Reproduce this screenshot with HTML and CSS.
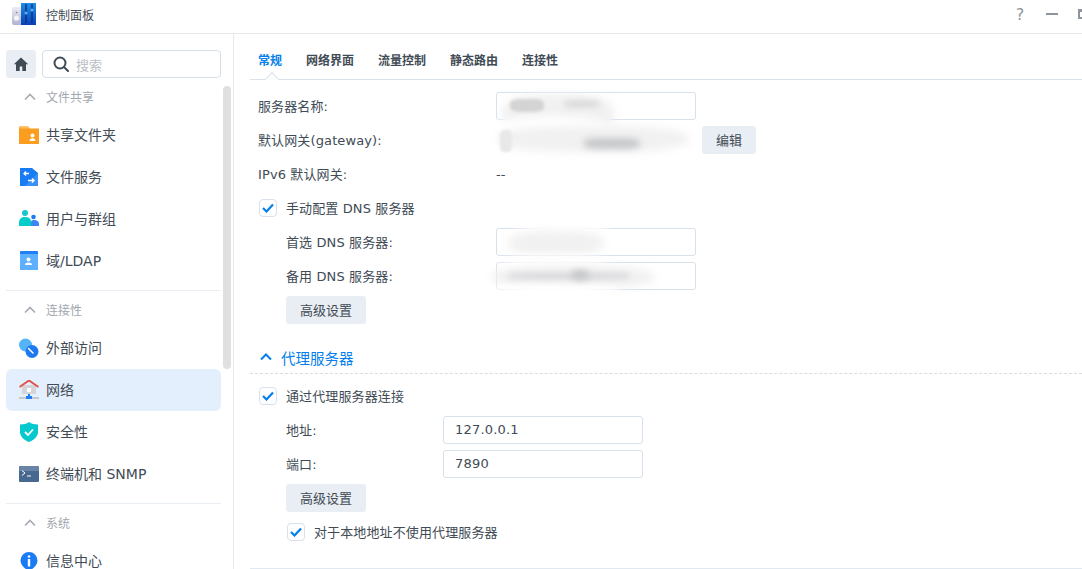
FILE: index.html
```html
<!DOCTYPE html>
<html lang="zh-CN">
<head>
<meta charset="utf-8">
<title>控制面板</title>
<link rel="stylesheet" href="styles.css">
</head>
<body>
<div class="window">
  <header class="titlebar">
    <svg class="app-icon" width="24" height="22" viewBox="0 0 24 22">
      <defs>
        <linearGradient id="appL" x1="0" y1="0" x2="0" y2="1"><stop offset="0" stop-color="#eceDF5"/><stop offset="1" stop-color="#b0b2d0"/></linearGradient>
        <linearGradient id="appR" x1="0" y1="0" x2="0" y2="1"><stop offset="0" stop-color="#1c8fe8"/><stop offset="1" stop-color="#0b3fb8"/></linearGradient>
      </defs>
      <path d="M0 6a2 2 0 0 1 2-2h7v18H2a2 2 0 0 1-2-2z" fill="url(#appL)"/>
      <rect x="9" y="0" width="15" height="22" fill="url(#appR)"/>
      <circle cx="4.500" cy="15" r="2.600" fill="#f4f4f8"/>
      <circle cx="4.500" cy="9.500" r=".8" fill="#777"/>
      <path d="M14 1v19M20 1v19" stroke="#0a2a70" stroke-width="1.200"/>
      <circle cx="14" cy="10" r="1.500" fill="#5ab0f5"/>
      <circle cx="20" cy="7" r="1.500" fill="#5ab0f5"/>
    </svg>
    <span class="app-title">控制面板</span>
    <div class="win-controls">
      <span class="win-help">?</span>
      <span class="win-min"></span>
      <span class="win-max"></span>
    </div>
  </header>
  <div class="body">
    <aside class="sidebar">
      <div class="search-row">
        <button class="home-btn" aria-label="主页">
          <svg width="16" height="16" viewBox="0 0 16 16"><path d="M8 1.500 .8 8.200h2.200V15h3.700v-4.500h2.600V15H13V8.200h2.200z" fill="#414b55"/></svg>
        </button>
        <div class="search">
          <svg width="16" height="16" viewBox="0 0 16 16" fill="none" stroke="#414b55" stroke-width="2"><circle cx="7" cy="7" r="5.500"/><path d="m11 11 4 4" stroke-linecap="round"/></svg>
          <span class="search-ph">搜索</span>
        </div>
      </div>
      <div class="group">
        <div class="group-head"><svg class="chev" width="12" height="8" viewBox="0 0 12 8" fill="none"><path d="m1 6.500 5-5 5 5" stroke="#a6abb2" stroke-width="1.600"/></svg><span>文件共享</span></div>
        <div class="nav-item">
          <svg width="20" height="20" viewBox="0 0 20 20"><path d="M0 1.500h9l2 2h9V19H0z" fill="#fb9d1e"/><path d="M0 1.500h9l2 2H0z" fill="#fdbb5c"/><circle cx="13.500" cy="10.500" r="2" fill="#fff"/><path d="M10.500 16c0-2 1.300-2.800 3-2.800s3 .8 3 2.800z" fill="#fff"/></svg>
          <span>共享文件夹</span>
        </div>
        <div class="nav-item">
          <svg width="20" height="20" viewBox="0 0 20 20"><path d="M1 1h12l6 5v13H1z" fill="#1a7cf5"/><path d="M19 6v13H6l13-13z" fill="#57a5fb" opacity=".5"/><path d="M10 6.500H5m2-2-2 2 2 2M9 13.500h6m-2-2 2 2-2 2" fill="none" stroke="#fff" stroke-width="1.300"/></svg>
          <span>文件服务</span>
        </div>
        <div class="nav-item">
          <svg width="20" height="20" viewBox="0 0 20 20"><circle cx="6" cy="4" r="3" fill="#14c7cf"/><path d="M0 17v-3.500C0 10 2.500 8 6 8s5.500 1.500 6 4v5z" fill="#05cdc9"/><circle cx="14.500" cy="8" r="2.300" fill="#1a7cf5"/><path d="M12 17v-4c.3-1.500 1.300-2 3-2 3 0 5 1.500 5 4v2z" fill="#3a86f3"/></svg>
          <span>用户与群组</span>
        </div>
        <div class="nav-item">
          <svg width="20" height="20" viewBox="0 0 20 20"><rect x="1" y="0" width="18" height="19" rx="1" fill="#1f80f6"/><path d="M1 3h18v16H2a1 1 0 0 1-1-1z" fill="#5cb0fd"/><circle cx="9.500" cy="8.500" r="2" fill="#fff"/><path d="M6 14c0-1.800 1.500-2.500 3.500-2.500S13 12.200 13 14z" fill="#fff"/></svg>
          <span>域/LDAP</span>
        </div>
      </div>
      <div class="group">
        <div class="group-head"><svg class="chev" width="12" height="8" viewBox="0 0 12 8" fill="none"><path d="m1 6.500 5-5 5 5" stroke="#a6abb2" stroke-width="1.600"/></svg><span>连接性</span></div>
        <div class="nav-item">
          <svg width="20" height="20" viewBox="0 0 20 20"><circle cx="6.500" cy="7" r="6.500" fill="#55b4f8"/><circle cx="13" cy="13.500" r="6.500" fill="#1f78ee"/><path d="M9.500 10.500 14 15" stroke="#fff" stroke-width="1.500" stroke-linecap="round"/></svg>
          <span>外部访问</span>
        </div>
        <div class="nav-item active">
          <svg width="20" height="20" viewBox="0 0 20 20"><rect x="3" y="5" width="14" height="9" fill="#d3d5d8"/><rect x="8" y="8" width="4" height="4" fill="#fff"/><path d="M.5 7 10 .5 19.500 7" fill="none" stroke="#e2524e" stroke-width="2"/><rect x="0" y="17" width="20" height="2" fill="#c4c8cc"/><rect x="7" y="16" width="6" height="3" fill="#1f7ff2"/><rect x="9" y="14" width="2" height="3" fill="#1f7ff2"/></svg>
          <span>网络</span>
        </div>
        <div class="nav-item">
          <svg width="20" height="20" viewBox="0 0 20 20"><path d="M10 0c2.500 1.800 5.500 2.500 9 2.500V10c0 4.500-4 8-9 10-5-2-9-5.500-9-10V2.500C4.500 2.500 7.500 1.800 10 0z" fill="#07c9cd"/><path d="m6 10 3 3 5-5.500" fill="none" stroke="#fff" stroke-width="1.800"/></svg>
          <span>安全性</span>
        </div>
        <div class="nav-item">
          <svg width="20" height="16" viewBox="0 0 20 16"><rect width="20" height="16" rx="1" fill="#47688f"/><rect width="20" height="5" fill="#7e9ab8" opacity=".6"/><path d="m3 4.500 3 2.500-3 2.500" fill="none" stroke="#fff" stroke-width="1"/><path d="M8 10h4" stroke="#fff" stroke-width="1"/></svg>
          <span>终端机和 SNMP</span>
        </div>
      </div>
      <div class="group last">
        <div class="group-head"><svg class="chev" width="12" height="8" viewBox="0 0 12 8" fill="none"><path d="m1 6.500 5-5 5 5" stroke="#a6abb2" stroke-width="1.600"/></svg><span>系统</span></div>
        <div class="nav-item">
          <svg width="20" height="20" viewBox="0 0 20 20"><path d="M10 1a8.500 8.500 0 0 1 8.500 8.500C18.500 14 14 18 10 20 6 18 1.500 14 1.500 9.500A8.500 8.500 0 0 1 10 1z" fill="#1a7cf5"/><circle cx="10" cy="5.500" r="1.300" fill="#fff"/><rect x="8.800" y="8" width="2.400" height="7.500" fill="#fff"/></svg>
          <span>信息中心</span>
        </div>
      </div>
      <div class="scrollbar"></div>
    </aside>
    <main class="main">
      <nav class="tabs">
        <span class="tab active">常规</span>
        <span class="tab">网络界面</span>
        <span class="tab">流量控制</span>
        <span class="tab">静态路由</span>
        <span class="tab">连接性</span>
      </nav>
      <div class="form">
        <div class="row"><label class="lbl w238">服务器名称:</label><div class="input"></div></div>
        <div class="row"><label class="lbl w238">默认网关(gateway):</label><div class="value w206"></div><button class="btn btn-edit">编辑</button></div>
        <div class="row"><label class="lbl w238">IPv6 默认网关:</label><div class="value">--</div></div>
        <div class="row"><span class="check"><svg width="12" height="10" viewBox="0 0 12 10"><path d="m1 5 3.500 3.500L11 1.500" fill="none" stroke="#057feb" stroke-width="2.200"/></svg></span><span class="lbl">手动配置 DNS 服务器</span></div>
        <div class="row in1"><label class="lbl w210">首选 DNS 服务器:</label><div class="input"></div></div>
        <div class="row in1"><label class="lbl w210">备用 DNS 服务器:</label><div class="input"></div></div>
        <div class="row in1"><button class="btn">高级设置</button></div>
      </div>
      <div class="section-head">
        <svg width="12" height="8" viewBox="0 0 12 8" fill="none"><path d="m1 6.500 5-5 5 5" stroke="#057feb" stroke-width="2"/></svg>
        <span>代理服务器</span>
      </div>
      <div class="form proxy">
        <div class="row"><span class="check"><svg width="12" height="10" viewBox="0 0 12 10"><path d="m1 5 3.500 3.500L11 1.500" fill="none" stroke="#057feb" stroke-width="2.200"/></svg></span><span class="lbl">通过代理服务器连接</span></div>
        <div class="row in1"><label class="lbl w157">地址:</label><div class="input">127.0.0.1</div></div>
        <div class="row in1"><label class="lbl w157">端口:</label><div class="input">7890</div></div>
        <div class="row in1"><button class="btn">高级设置</button></div>
        <div class="row in1"><span class="check"><svg width="12" height="10" viewBox="0 0 12 10"><path d="m1 5 3.500 3.500L11 1.500" fill="none" stroke="#057feb" stroke-width="2.200"/></svg></span><span class="lbl">对于本地地址不使用代理服务器</span></div>
      </div>
      <div class="foot-line"></div>
      <div class="redactions">
        <i class="wash a1"></i><i class="white b1"></i><i class="smudge c1"></i><i class="smudge c2"></i>
        <i class="wash a2"></i><i class="smudge c3"></i><i class="smudge c4"></i>
        <i class="white b3"></i><i class="wash a3"></i>
        <i class="white b4"></i><i class="wash a4"></i><i class="white b5"></i><i class="smudge c5"></i><i class="smudge c6"></i>
      </div>
    </main>
  </div>
</div>
</body>
</html>
```

FILE: styles.css
```css
* { box-sizing: border-box; }
html, body { margin: 0; height: 100%; overflow: hidden; background: #fff; }
body {
  font-family: "DejaVu Sans", "Noto Sans CJK SC", sans-serif;
  font-size: 13px;
  color: #414b55;
}
.window { display: flex; flex-direction: column; height: 569px; }

.titlebar {
  flex: none;
  height: 34px;
  display: flex;
  align-items: center;
  padding: 0 0 5px 12px;
  border-bottom: 1px solid #e6e8ea;
}
.app-icon { display: block; }
.app-title { margin-left: 10px; font-size: 12px; }
.win-controls { margin-left: auto; display: flex; align-items: center; }
.win-help { width: 16px; text-align: center; font-size: 16px; color: #8d949c; }
.win-min { width: 12px; height: 2px; margin-left: 18px; background: #8d949c; }
.win-max { width: 12px; height: 10px; margin-left: 20px; margin-right: -8px; border: 2px solid #8d949c; border-top-width: 3px; }

.body { flex: 1; display: flex; min-height: 0; }

.sidebar {
  flex: none;
  width: 234px;
  position: relative;
  overflow: hidden;
  border-right: 1px solid #e6e8ea;
  padding: 16px 12px 0 6px;
}
.search-row { display: flex; gap: 6px; height: 28px; }
.home-btn {
  width: 30px; height: 28px; padding: 0; border: 0; border-radius: 3px;
  background: #e9edf4;
  display: flex; align-items: center; justify-content: center;
}
.search {
  flex: 1;
  display: flex; align-items: center; gap: 7px;
  padding-left: 10px;
  border: 1px solid #d5dfe9; border-radius: 4px;
}
.search-ph { color: #b9bec4; font-size: 13px; }
.group { border-bottom: 1px solid #e9edf4; padding-bottom: 8px; }
.group.last { border-bottom: 0; }
.group-head {
  height: 36px;
  display: flex; align-items: center;
  font-size: 12px; color: #a2a7ae;
  padding-left: 18px;
}
.group-head span { margin-left: 10px; }
.chev { display: block; margin-top: 2px; }
.nav-item {
  height: 42px;
  display: flex; align-items: center;
  padding-left: 13px;
  font-size: 14px;
  border-radius: 6px;
}
.nav-item svg { flex: none; width: 20px; }
.nav-item span { margin-left: 7px; padding-bottom: 2px; }
.nav-item.active { background: #e3effc; }
.scrollbar {
  position: absolute; top: 52px; left: 223px;
  width: 8px; height: 283px;
  border-radius: 4px;
  background: #e0e0e0;
}

.main { flex: 1; min-width: 0; position: relative; padding: 0 0 0 16px; overflow: hidden; }
.tabs {
  height: 46px;
  display: flex; gap: 24px; align-items: center;
  padding: 5px 0 0 8px;
  border-bottom: 1px solid #d9e3ee;
  position: relative;
  font-size: 12px; font-weight: 700;
}
.tabs::after {
  content: "";
  position: absolute; left: 17px; bottom: -5px;
  width: 9px; height: 9px;
  background: #fff;
  border-left: 1px solid #d9e3ee; border-top: 1px solid #d9e3ee;
  transform: rotate(45deg);
}
.tab.active { color: #057feb; }

.form { padding: 12px 0 0 8px; display: flex; flex-direction: column; gap: 6px; }
.form.proxy { padding-top: 8px; }
.row { height: 28px; display: flex; align-items: center; }
.row.in1 { padding-left: 28px; }
.lbl { display: block; flex: none; padding-bottom: 2px; letter-spacing: .12px; }
.w238 { width: 238px; }
.w210 { width: 210px; }
.w157 { width: 157px; }
.w206 { width: 206px; }
.value { letter-spacing: .12px; }
.input {
  width: 200px; height: 28px;
  border: 1px solid #d7e1ec; border-radius: 3px;
  padding-left: 11px;
  line-height: 26px;
  letter-spacing: .2px;
}
.btn {
  height: 28px; width: 80px; padding: 0 0 2px; border: 0; border-radius: 3px;
  background: #e9edf4; color: #414b55;
  font: inherit;
}
.btn-edit { width: 54px; }
.check {
  width: 18px; height: 18px; flex: none;
  margin: 0 9px 0 1px;
  border: 1px solid #d7e1ec; border-radius: 4px;
  display: flex; align-items: center; justify-content: center;
}

.section-head {
  margin-top: 21px;
  height: 29px;
  display: flex; align-items: center; gap: 9px;
  padding: 0 0 4px 10px;
  border-bottom: 1px dashed #d9dcdf;
  color: #057feb; font-size: 14.500px;
}
.foot-line { height: 1px; margin-top: 22px; background: #e2e8ef; }

.redactions { position: absolute; inset: 0; pointer-events: none; }
.redactions i { position: absolute; display: block; }
.white { background: #fff; filter: blur(4px); border-radius: 50%; }
.wash { background: #f1f1f2; filter: blur(4px); border-radius: 40%; }
.smudge { background: #c8c9cb; filter: blur(3px); border-radius: 30%; }
.a1 { left: 268px; top: 60px; width: 112px; height: 40px; }
.b1 { left: 258px; top: 82px; width: 120px; height: 26px; }
.c1 { left: 276px; top: 65px; width: 34px; height: 13px; background: #d4d4d4; filter: blur(1.500px); }
.c2 { left: 330px; top: 67px; width: 36px; height: 6px; opacity: .7; }
.a2 { left: 264px; top: 92px; width: 190px; height: 26px; }
.c3 { left: 350px; top: 104px; width: 56px; height: 11px; }
.c4 { left: 266px; top: 96px; width: 12px; height: 22px; background: #e8e8e8; filter: blur(1px); }
.b3 { left: 284px; top: 184px; width: 92px; height: 16px; }
.a3 { left: 274px; top: 197px; width: 96px; height: 24px; }
.b4 { left: 264px; top: 222px; width: 112px; height: 12px; }
.a4 { left: 258px; top: 232px; width: 162px; height: 22px; }
.b5 { left: 256px; top: 250px; width: 130px; height: 14px; }
.c5 { left: 274px; top: 239px; width: 122px; height: 6px; opacity: .7; }
.c6 { left: 338px; top: 236px; width: 16px; height: 10px; }
```
